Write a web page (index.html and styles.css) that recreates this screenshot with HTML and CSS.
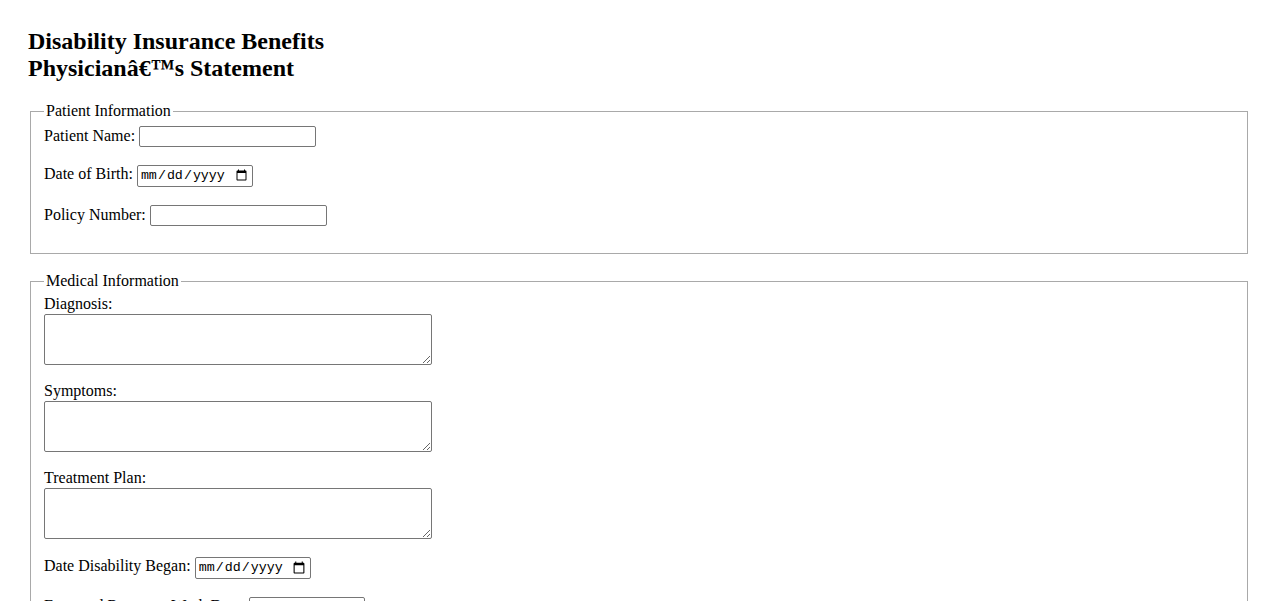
FILE: index.html
```html
<!DOCTYPE html>
<html>
<head>
<meta charset="utf-8">
<title>Physician's Statement</title>
<link rel="stylesheet" href="styles.css">
</head>
<body>
<div class="page">
  <h2 class="title">Disability Insurance Benefits<br>Physicianâ€™s Statement</h2>
  <form class="form">
    <fieldset class="section">
      <legend>Patient Information</legend>
      <div class="group inline">
        <label for="pname">Patient Name:</label>
        <input type="text" id="pname" class="text-field">
      </div>
      <div class="group inline">
        <label for="dob">Date of Birth:</label>
        <input type="date" id="dob" class="date-field">
      </div>
      <div class="group inline">
        <label for="policy">Policy Number:</label>
        <input type="text" id="policy" class="text-field">
      </div>
    </fieldset>
    <fieldset class="section">
      <legend>Medical Information</legend>
      <div class="group">
        <label for="diag" class="block-label">Diagnosis:</label>
        <textarea id="diag" class="area" rows="3"></textarea>
      </div>
      <div class="group">
        <label for="symp" class="block-label">Symptoms:</label>
        <textarea id="symp" class="area" rows="3"></textarea>
      </div>
      <div class="group">
        <label for="plan" class="block-label">Treatment Plan:</label>
        <textarea id="plan" class="area" rows="3"></textarea>
      </div>
      <div class="group inline">
        <label for="began">Date Disability Began:</label>
        <input type="date" id="began" class="date-field">
      </div>
      <div class="group inline">
        <label for="ret">Expected Return to Work Date:</label>
        <input type="date" id="ret" class="date-field">
      </div>
    </fieldset>
  </form>
</div>
</body>
</html>
```
FILE: styles.css
```css
body {
  margin: 8px;
  font-family: "Liberation Serif", "Times New Roman", serif;
  font-size: 16px;
  color: #000;
  background: #fff;
}
.page {
  padding: 20px;
}
.title {
  font-size: 24px;
  font-weight: bold;
  margin: 0 0 20px 0;
}
.section {
  margin: 0 2px 18px 2px;
  border: 1px solid #a9a9a9;
  padding: 5px 12px 10px 13px;
}
.section legend {
  padding: 0 2px;
}
.group {
  margin-bottom: 13px;
}
.group.inline {
  margin-bottom: 16px;
}
.block-label {
  display: block;
}
.text-field {
  width: 177px;
  height: 21px;
  margin: 1px 0;
  box-sizing: border-box;
  border: 1px solid #767676;
  border-radius: 2px;
  font-size: 13.33px;
  padding: 1px 2px;
}
.date-field {
  width: 116px;
  height: 22px;
  margin: 1px 0;
  box-sizing: border-box;
  border: 1px solid #767676;
  border-radius: 2px;
  font-family: "Liberation Mono", monospace;
  font-size: 13.33px;
  padding: 1px 2px;
}
.area {
  width: 388px;
  height: 51px;
  margin-top: 1px;
  box-sizing: border-box;
  border: 1px solid #767676;
  border-radius: 2px;
  font-family: "Liberation Mono", monospace;
  font-size: 13.33px;
}
```
